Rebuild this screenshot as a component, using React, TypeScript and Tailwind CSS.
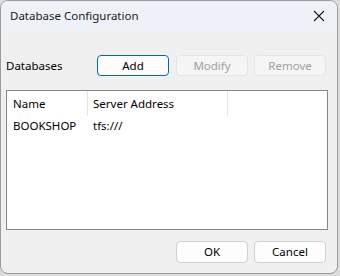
import React from "react";

export default function App() {
  const font = { fontFamily: '"Segoe UI", "Noto Sans", "Open Sans", sans-serif' };
  return (
    <div className="w-[340px] h-[276px] bg-[#dcdcdc] overflow-hidden" style={font}>
      <div className="w-[338px] h-[274px] rounded-[8px] border border-[#9a9a9a] bg-[#f0f0f0] overflow-hidden flex flex-col">
        <div className="h-[30px] bg-[#eef2f8] flex items-center justify-between pl-[9px] pr-[9px] shrink-0">
          <span className="text-[11.5px] text-[#1a1a1a]">Database Configuration</span>
          <svg width="12" height="12" viewBox="0 0 12 12" className="mr-[3px]">
            <path d="M1 1 L11 11 M11 1 L1 11" stroke="#1a1a1a" strokeWidth="1.1" />
          </svg>
        </div>
        <div className="flex-1 flex flex-col px-[5px] pt-[24px] pb-[10px]">
          <div className="flex items-center h-[21px]">
            <span className="text-[11.5px] text-black w-[91px]">Databases</span>
            <button className="w-[72px] h-[21px] rounded-[4px] border border-[#0067c0] bg-[#fdfdfd] text-[11.5px] text-black">Add</button>
            <button className="ml-[7px] w-[72px] h-[21px] rounded-[4px] border border-[#e5e5e5] bg-[#f5f5f5] text-[11.5px] text-[#a0a0a0]">Modify</button>
            <button className="ml-[6px] w-[72px] h-[21px] rounded-[4px] border border-[#e5e5e5] bg-[#f5f5f5] text-[11.5px] text-[#a0a0a0]">Remove</button>
          </div>
          <div className="mt-[14px] w-[322px] h-[140px] border border-[#828790] bg-white flex flex-col">
            <div className="flex h-[25px] items-center text-[11.5px] text-black">
              <div className="w-[81px] h-full pl-[6px] flex items-center border-r border-[#e5e5e5]">Name</div>
              <div className="w-[140px] h-full pl-[5px] flex items-center border-r border-[#e5e5e5]">Server Address</div>
            </div>
            <div className="flex h-[20px] items-center text-[11.5px] text-black">
              <div className="w-[81px] pl-[6px]">BOOKSHOP</div>
              <div className="pl-[5px]">tfs:///</div>
            </div>
          </div>
          <div className="mt-auto flex justify-end pr-[6px] gap-[6px]">
            <button className="w-[72px] h-[22px] rounded-[4px] border border-[#d0d0d0] bg-[#fdfdfd] text-[11.5px] text-black">OK</button>
            <button className="w-[72px] h-[22px] rounded-[4px] border border-[#d0d0d0] bg-[#fdfdfd] text-[11.5px] text-black">Cancel</button>
          </div>
        </div>
      </div>
    </div>
  );
}
